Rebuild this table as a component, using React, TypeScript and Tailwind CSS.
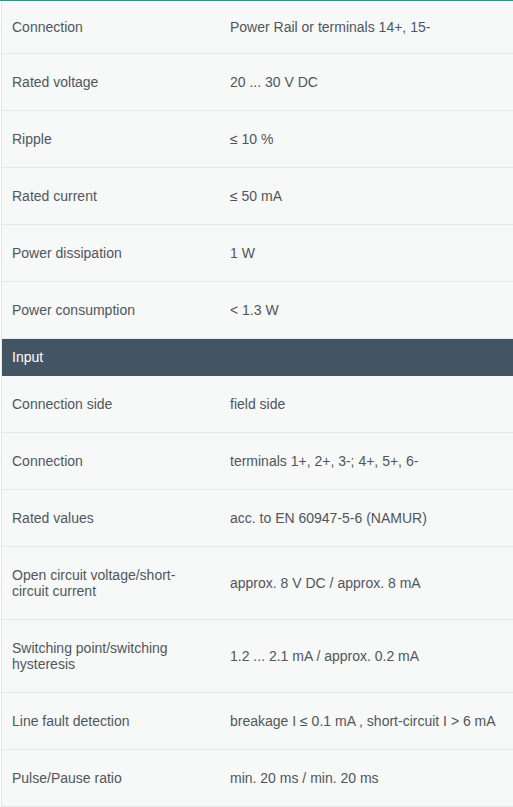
const topRows = [
  ['Connection', 'Power Rail or terminals 14+, 15-'],
  ['Rated voltage', '20 ... 30 V DC'],
  ['Ripple', '≤ 10 %'],
  ['Rated current', '≤ 50 mA'],
  ['Power dissipation', '1 W'],
  ['Power consumption', '< 1.3 W'],
];

const inputRows = [
  ['Connection side', 'field side'],
  ['Connection', 'terminals 1+, 2+, 3-; 4+, 5+, 6-'],
  ['Rated values', 'acc. to EN 60947-5-6 (NAMUR)'],
  ['Open circuit voltage/short-circuit current', 'approx. 8 V DC / approx. 8 mA'],
  ['Switching point/switching hysteresis', '1.2 ... 2.1 mA / approx. 0.2 mA'],
  ['Line fault detection', 'breakage I ≤ 0.1 mA , short-circuit I > 6 mA'],
  ['Pulse/Pause ratio', 'min. 20 ms / min. 20 ms'],
];

function Row({ label, value, first }: { label: string; value: string; first?: boolean }) {
  const tall = label.length > 30;
  return (
    <div
      className={`grid grid-cols-[218px_1fr] items-center border-b border-[#e6e8e9] text-[14px] leading-4 text-[#50565c] ${
        first ? 'h-[53px]' : tall ? 'h-[73px]' : 'h-[57px]'
      }`}
    >
      <div className="pl-[10px] pr-[20px]">{label}</div>
      <div className="pl-[10px] pr-2">{value}</div>
    </div>
  );
}

export default function App() {
  return (
    <div className="w-[513px] h-[807px] bg-white pl-[1px] font-['Liberation_Sans',Arial,sans-serif]">
      <div className="h-[1px] bg-[#00a88e] -ml-[1px]" />
      <div className="border-l border-[#e3e5e6] bg-[#f7f8f8]">
        {topRows.map(([l, v], i) => (
          <Row key={l + i} label={l} value={v} first={i === 0} />
        ))}
        <div className="h-[37px] flex items-center bg-[#435563] pl-[10px] text-[14px] text-white">
          Input
        </div>
        {inputRows.map(([l, v], i) => (
          <Row key={l + i} label={l} value={v} />
        ))}
      </div>
    </div>
  );
}
